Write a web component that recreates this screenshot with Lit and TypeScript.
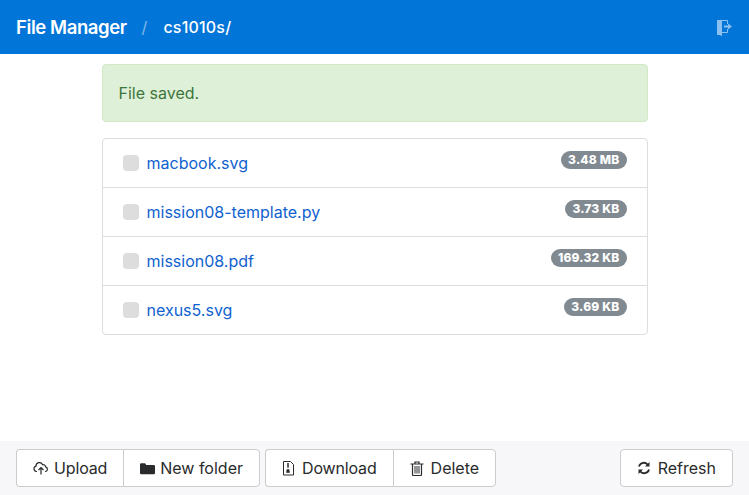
import { LitElement, html, css } from "lit";
import { customElement } from "lit/decorators.js";

const files = [
  ["macbook.svg", "3.48 MB"],
  ["mission08-template.py", "3.73 KB"],
  ["mission08.pdf", "169.32 KB"],
  ["nexus5.svg", "3.69 KB"],
];

@customElement("app-root")
export class AppRoot extends LitElement {
  static styles = css`
    :host {
      display: flex;
      flex-direction: column;
      height: 495px;
      font-family: Inter, "Liberation Sans", sans-serif;
      font-size: 16px;
      color: #292b2c;
      background: #fff;
      overflow: hidden;
    }
    .nav {
      height: 54px;
      background: #0275d8;
      display: flex;
      align-items: center;
      padding: 0 16px;
      color: #fff;
    }
    .brand { font-size: 18.5px; font-weight: 600; letter-spacing: -0.42px; }
    .sep { margin: 0 16px 0 15px; color: rgba(255,255,255,.5); font-size: 16px; }
    .path { font-size: 16px; font-weight: 500; letter-spacing: 0.2px; }
    .exit { margin-left: auto; display: block; }
    main { flex: 1; width: 546px; margin: 0 auto; padding-top: 10px; box-sizing: border-box; }
    .alert {
      height: 58px;
      box-sizing: border-box;
      background: #dff0d8;
      border: 1px solid #d0e9c6;
      border-radius: 4px;
      color: #3c763d;
      display: flex;
      align-items: center;
      padding: 0 16px;
      font-size: 16px;
      margin-bottom: 16px;
    }
    .list { border: 1px solid #ddd; border-radius: 4px; }
    .row {
      height: 48px;
      display: flex;
      align-items: center;
      padding: 0 20px;
      border-bottom: 1px solid #ddd;
    }
    .row:last-child { border-bottom: 0; }
    .check {
      width: 16px; height: 16px;
      border-radius: 4px;
      background: #ddd;
      margin-right: 8px;
    }
    a { color: #0f62d0; text-decoration: none; font-size: 16px; }
    .badge {
      margin-left: auto;
      align-self: flex-start;
      margin-top: 12px;
      background: #818a91;
      color: #fff;
      font-size: 12px;
      font-weight: 800;
      letter-spacing: 0.2px;
      line-height: 12px;
      padding: 3px 7px;
      border-radius: 10px;
    }
    .foot {
      height: 54px;
      box-sizing: border-box;
      background: #f7f7f9;
      display: flex;
      align-items: center;
      padding: 0 16px;
      gap: 5px;
    }
    .group { display: flex; }
    .btn {
      height: 38px;
      box-sizing: border-box;
      background: #fff;
      border: 1px solid #ccc;
      border-radius: 4px;
      padding: 0 16px;
      display: flex;
      align-items: center;
      font-size: 16px;
      color: #292b2c;
    }
    .tight { letter-spacing: -0.15px; }
    .group .btn:not(:last-child) { border-radius: 4px 0 0 4px; border-right: 0; }
    .group .btn:last-child { border-radius: 0 4px 4px 0; }
    .right { margin-left: auto; }
    svg { flex: none; }
    .g5 { margin-right: 5px; }
    .g7 { margin-right: 7px; }
  `;

  render() {
    return html`
      <div class="nav">
        <span class="brand">File Manager</span>
        <span class="sep">/</span>
        <span class="path">cs1010s/</span>
        <svg class="exit" width="17" height="17" viewBox="0 0 17 17" fill="none">
          <path d="M1 1 L6 3 V17 L1 15 Z M1 1 H6 V16 H1 Z" fill="#8cc0f0"/>
          <path d="M6 1.5 H11.5 V5 M11.5 10 V13.5 H6" stroke="#8cc0f0" stroke-width="1"/>
          <path d="M8 6.5 H12 V4.5 L16 7.5 L12 10.5 V8.5 H8 Z" fill="#8cc0f0"/>
        </svg>
      </div>
      <main>
        <div class="alert">File saved.</div>
        <div class="list">
          ${files.map(
            ([n, s]) => html`<div class="row">
              <span class="check"></span>
              <a href="#">${n}</a>
              <span class="badge">${s}</span>
            </div>`
          )}
        </div>
      </main>
      <div class="foot">
        <div class="group">
          <div class="btn tight">
            <svg class="g5" width="16" height="14" viewBox="0 0 16 14" fill="none" stroke="#292b2c" stroke-width="1.2">
              <path d="M4 10.5 H3.5 A2.7 2.7 0 0 1 3 5.2 A3.4 3.4 0 0 1 9.5 3.6 A2.6 2.6 0 0 1 12.6 5.8 A2.4 2.4 0 0 1 12.4 10.5 H12"/>
              <path d="M8 13.5 V7 M5.5 9 L8 6.5 L10.5 9"/>
            </svg>
            Upload
          </div>
          <div class="btn">
            <svg class="g5" width="15" height="13" viewBox="0 0 15 13">
              <path d="M0 2.5 A1.2 1.2 0 0 1 1.2 1.3 H5 L6.2 3 H13.8 A1.2 1.2 0 0 1 15 4.2 V11 A1.2 1.2 0 0 1 13.8 12.2 H1.2 A1.2 1.2 0 0 1 0 11 Z" fill="#292b2c"/>
            </svg>
            New folder
          </div>
        </div>
        <div class="group">
          <div class="btn tight">
            <svg class="g7" width="13" height="15" viewBox="0 0 13 15" fill="none" stroke="#292b2c">
              <path d="M1.5 .5 H8.5 L11.5 3.5 V14 H1.5 Z"/>
              <path d="M6 2 V7 M5 3 H7 M5 5 H7" stroke-width="1"/>
              <path d="M5 8.5 H7 L7.5 11.5 H4.5 Z" fill="#292b2c" stroke-width=".6"/>
            </svg>
            Download
          </div>
          <div class="btn">
            <svg class="g7" width="14" height="15" viewBox="0 0 14 15" fill="none" stroke="#292b2c">
              <path d="M.5 3 H13.5 M5 3 V1 H9 V3" stroke-width="1.2"/>
              <path d="M2.5 3 V13.5 A1 1 0 0 0 3.5 14.5 H10.5 A1 1 0 0 0 11.5 13.5 V3" stroke-width="1.2"/>
              <path d="M5 5 V12.5 M7 5 V12.5 M9 5 V12.5" stroke-width="1"/>
            </svg>
            Delete
          </div>
        </div>
        <div class="btn right">
          <svg class="g7" width="14" height="14" viewBox="0 0 14 14" fill="none" stroke="#292b2c" stroke-width="1.8">
            <path d="M2 5.5 A5 5 0 0 1 11 4"/>
            <path d="M12 8.5 A5 5 0 0 1 3 10"/>
            <path d="M12.5 1 V5.5 H8 Z M1.5 13 V8.5 H6 Z" fill="#292b2c" stroke="none"/>
          </svg>
          Refresh
        </div>
      </div>
    `;
  }
}
